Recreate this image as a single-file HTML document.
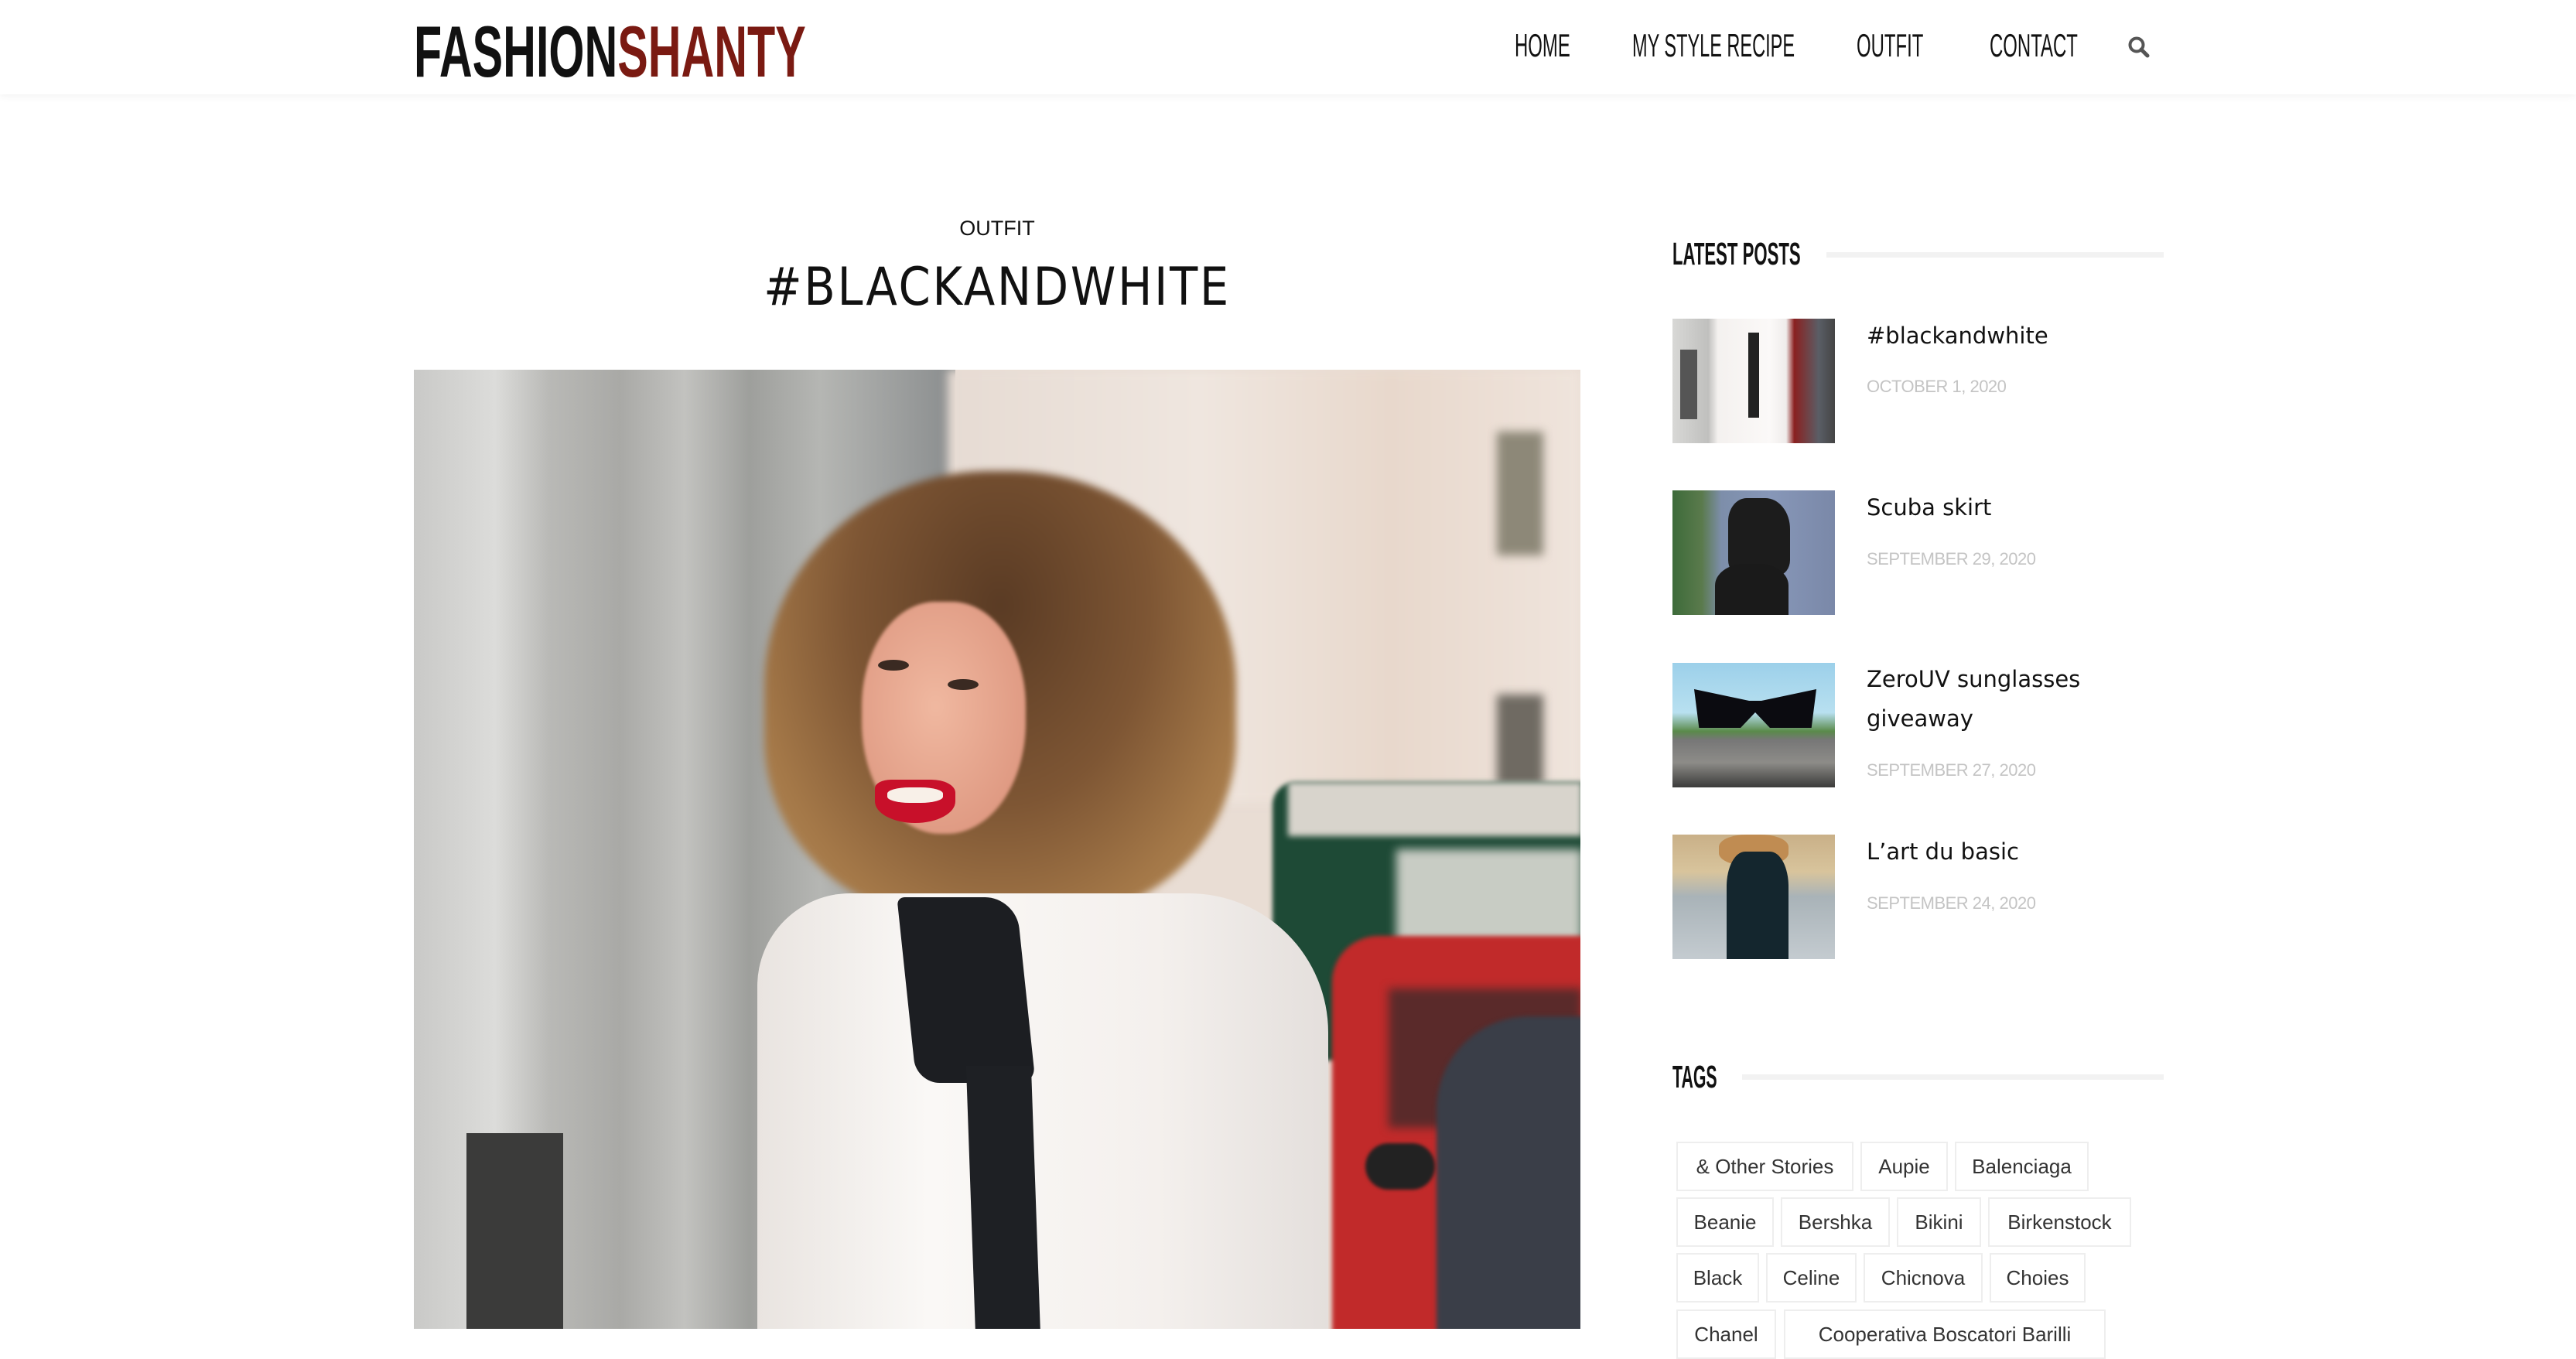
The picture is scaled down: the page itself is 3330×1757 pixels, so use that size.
<!DOCTYPE html>
<html><head><meta charset="utf-8"><style>
*{margin:0;padding:0;box-sizing:border-box}
body{width:3330px;height:1718px;overflow:hidden;background:#fff;position:relative;font-family:"Liberation Sans",sans-serif;color:#111}
.a{position:absolute}
.hdr{left:0;top:0;width:3330px;height:122px;background:#fff;box-shadow:0 2px 10px rgba(0,0,0,.06);z-index:5}
.sq{display:inline-block;transform-origin:0 0;white-space:nowrap}
.nav{font-size:42px;line-height:42px;top:38px;color:#111}
.wh{font-size:41px;font-weight:bold;line-height:41px;color:#111}
.ptitle{left:2413px;font-family:"DejaVu Sans","Liberation Sans",sans-serif;font-size:29px;color:#111;line-height:51px}
.pdate{left:2413px;font-size:22px;color:#c4c4c4;letter-spacing:-0.5px}
.th{left:2162px;width:210px;height:161px;overflow:hidden}
.tag{height:64px;border:2px solid #eeeeee;font-size:26px;color:#333;line-height:60px;text-align:center;white-space:nowrap}
.img{left:535px;top:478px;width:1508px;height:1240px;overflow:hidden;background:#e9ddd4}
.img div{position:absolute}
</style></head><body>

<div class="a hdr">
  <div class="a" style="left:535px;top:20px;font-size:94px;font-weight:bold;line-height:94px;"><span class="sq" style="transform:scaleX(0.63)">FASHION<span style="color:#7a1a12">SHANTY</span></span></div>
  <div class="a nav" style="left:1958px"><span class="sq" style="transform:scaleX(0.57)">HOME</span></div>
  <div class="a nav" style="left:2110px"><span class="sq" style="transform:scaleX(0.56)">MY STYLE RECIPE</span></div>
  <div class="a nav" style="left:2400px"><span class="sq" style="transform:scaleX(0.57)">OUTFIT</span></div>
  <div class="a nav" style="left:2572px"><span class="sq" style="transform:scaleX(0.57)">CONTACT</span></div>
  <svg class="a" style="left:2750px;top:46px" width="30" height="30" viewBox="0 0 30 30"><circle cx="12" cy="12" r="8.5" fill="none" stroke="#555" stroke-width="4"/><path d="M18 18 L26 26" stroke="#555" stroke-width="5" stroke-linecap="round"/></svg>
</div>

<div class="a" style="left:535px;width:1508px;top:280px;text-align:center;font-size:27px;color:#111">OUTFIT</div>
<div class="a" style="left:535px;width:1508px;top:332px;text-align:center;font-size:68px;letter-spacing:3px;color:#111;font-family:'DejaVu Sans','Liberation Sans',sans-serif;font-weight:normal"><span class="sq" style="transform:scaleX(0.87);transform-origin:50% 0">#BLACKANDWHITE</span></div>

<div class="a img">
  <div style="left:0;top:0;width:700px;height:1240px;background:linear-gradient(90deg,#c9c9c7 0%,#dcdcda 15%,#b9b9b6 25%,#a9a9a6 38%,#c2c2bf 50%,#9e9f9c 62%,#b5b6b3 75%,#8a8d8e 100%)"></div>
  <div style="left:68px;top:987px;width:125px;height:260px;background:#3b3b3a"></div>
  <div style="left:690px;top:0;width:818px;height:560px;background:linear-gradient(90deg,#e6dbd3,#efe6df 40%,#e8d8cc 70%,#efe4dc);filter:blur(6px)"></div>
  <div style="left:1400px;top:80px;width:60px;height:160px;background:#8d8878;filter:blur(6px)"></div>
  <div style="left:1400px;top:420px;width:60px;height:140px;background:#6f6a62;filter:blur(6px)"></div>
  <div style="left:1110px;top:533px;width:420px;height:360px;background:#1e4a36;border-radius:30px 0 0 0;filter:blur(3px)"></div>
  <div style="left:1130px;top:533px;width:380px;height:70px;background:#d8d4cc;filter:blur(4px)"></div>
  <div style="left:1270px;top:620px;width:240px;height:140px;background:#c8ccc4;filter:blur(6px)"></div>
  <div style="left:1187px;top:732px;width:340px;height:520px;background:#c12a2a;border-radius:60px 0 0 0;filter:blur(3px)"></div>
  <div style="left:1260px;top:800px;width:250px;height:180px;background:#5a2a2a;filter:blur(6px)"></div>
  <div style="left:1322px;top:836px;width:200px;height:420px;background:#3a3e48;border-radius:120px 0 0 0;filter:blur(3px)"></div>
  <div style="left:1230px;top:1000px;width:90px;height:60px;background:#222;border-radius:30px;filter:blur(2px)"></div>
  <div style="left:453px;top:131px;width:610px;height:580px;background:radial-gradient(ellipse at 50% 30%,#5a3b24 0%,#7e5634 45%,#a47848 75%,#b8905c 100%);border-radius:48% 48% 40% 40%;filter:blur(5px)"></div>
  <div style="left:579px;top:300px;width:212px;height:300px;background:radial-gradient(ellipse at 45% 45%,#f0b8a0,#d98f78);border-radius:45% 45% 48% 48%;filter:blur(2px)"></div>
  <div style="left:600px;top:375px;width:40px;height:14px;background:#3a2a22;border-radius:50%"></div>
  <div style="left:690px;top:400px;width:40px;height:14px;background:#3a2a22;border-radius:50%"></div>
  <div style="left:596px;top:530px;width:104px;height:56px;background:#c8102a;border-radius:20% 30% 50% 50%"></div>
  <div style="left:612px;top:540px;width:72px;height:20px;background:#f8f0e8;border-radius:40%"></div>
  <div style="left:444px;top:677px;width:738px;height:600px;background:linear-gradient(90deg,#e9e4e0,#faf8f6 30%,#f4f0ed 70%,#e4dfdc);border-radius:120px 180px 0 0"></div>
  <div style="left:637px;top:682px;width:154px;height:240px;background:#1c1e22;border-radius:10px 40px 20px 30px;transform:skewX(6deg)"></div>
  <div style="left:720px;top:900px;width:84px;height:350px;background:#1e2024;transform:skewX(2deg)"></div>
</div>

<div class="a wh" style="left:2162px;top:308px"><span class="sq" style="transform:scaleX(0.54)">LATEST POSTS</span></div>
<div class="a" style="left:2361px;top:326px;width:436px;height:7px;background:#f2f2f2"></div>

<div class="a th" style="top:412px;background:linear-gradient(90deg,#d8d8d6 0%,#c0c0be 22%,#f4f1ef 28%,#fbf9f8 60%,#efeceb 70%,#8a2020 75%,#5a5e66 90%,#444 100%)">
  <div class="a" style="left:10px;top:40px;width:22px;height:90px;background:#555"></div>
  <div class="a" style="left:98px;top:18px;width:14px;height:110px;background:#222"></div>
</div>
<div class="a ptitle" style="top:409px">#blackandwhite</div>
<div class="a pdate" style="top:487px">OCTOBER 1, 2020</div>

<div class="a th" style="top:634px;background:linear-gradient(90deg,#3d6b3a 0%,#5a7a4c 18%,#7d8eaa 30%,#8797b8 60%,#7a88a8 100%)">
  <div class="a" style="left:72px;top:10px;width:80px;height:100px;background:#1c1c1c;border-radius:30% 40% 20% 20%"></div>
  <div class="a" style="left:55px;top:95px;width:95px;height:70px;background:#1a1a1a;border-radius:40% 40% 0 0"></div>
</div>
<div class="a ptitle" style="top:631px">Scuba skirt</div>
<div class="a pdate" style="top:710px">SEPTEMBER 29, 2020</div>

<div class="a th" style="top:857px;background:linear-gradient(180deg,#9cd0ea 0%,#b8e0f0 40%,#5a8a4a 55%,#777 62%,#8d8c88 80%,#3b3b3a 100%)">
  <div class="a" style="left:28px;top:34px;width:158px;height:50px;background:#0b0b10;clip-path:polygon(0 0,45% 30%,55% 30%,100% 0,96% 100%,62% 100%,50% 60%,38% 100%,4% 100%)"></div>
</div>
<div class="a ptitle" style="top:853px">ZeroUV sunglasses<br>giveaway</div>
<div class="a pdate" style="top:983px">SEPTEMBER 27, 2020</div>

<div class="a th" style="top:1079px;background:linear-gradient(180deg,#c9b088 0%,#d8c49c 30%,#a9b3b8 50%,#c4cbd0 100%)">
  <div class="a" style="left:60px;top:0;width:90px;height:40px;background:#c08c52;border-radius:40%"></div>
  <div class="a" style="left:70px;top:22px;width:80px;height:150px;background:#14262e;border-radius:30% 30% 0 0"></div>
</div>
<div class="a ptitle" style="top:1076px">L’art du basic</div>
<div class="a pdate" style="top:1155px">SEPTEMBER 24, 2020</div>

<div class="a wh" style="left:2162px;top:1372px"><span class="sq" style="transform:scaleX(0.52)">TAGS</span></div>
<div class="a" style="left:2252px;top:1389px;width:545px;height:7px;background:#f2f2f2"></div>

<div class="a tag" style="left:2167px;top:1476px;width:229px">&amp; Other Stories</div>
<div class="a tag" style="left:2405px;top:1476px;width:113px">Aupie</div>
<div class="a tag" style="left:2527px;top:1476px;width:173px">Balenciaga</div>
<div class="a tag" style="left:2167px;top:1548px;width:126px">Beanie</div>
<div class="a tag" style="left:2302px;top:1548px;width:141px">Bershka</div>
<div class="a tag" style="left:2452px;top:1548px;width:109px">Bikini</div>
<div class="a tag" style="left:2570px;top:1548px;width:185px">Birkenstock</div>
<div class="a tag" style="left:2167px;top:1620px;width:107px">Black</div>
<div class="a tag" style="left:2283px;top:1620px;width:117px">Celine</div>
<div class="a tag" style="left:2409px;top:1620px;width:154px">Chicnova</div>
<div class="a tag" style="left:2572px;top:1620px;width:124px">Choies</div>
<div class="a tag" style="left:2167px;top:1693px;width:129px">Chanel</div>
<div class="a tag" style="left:2306px;top:1693px;width:416px">Cooperativa Boscatori Barilli</div>
</body></html>
